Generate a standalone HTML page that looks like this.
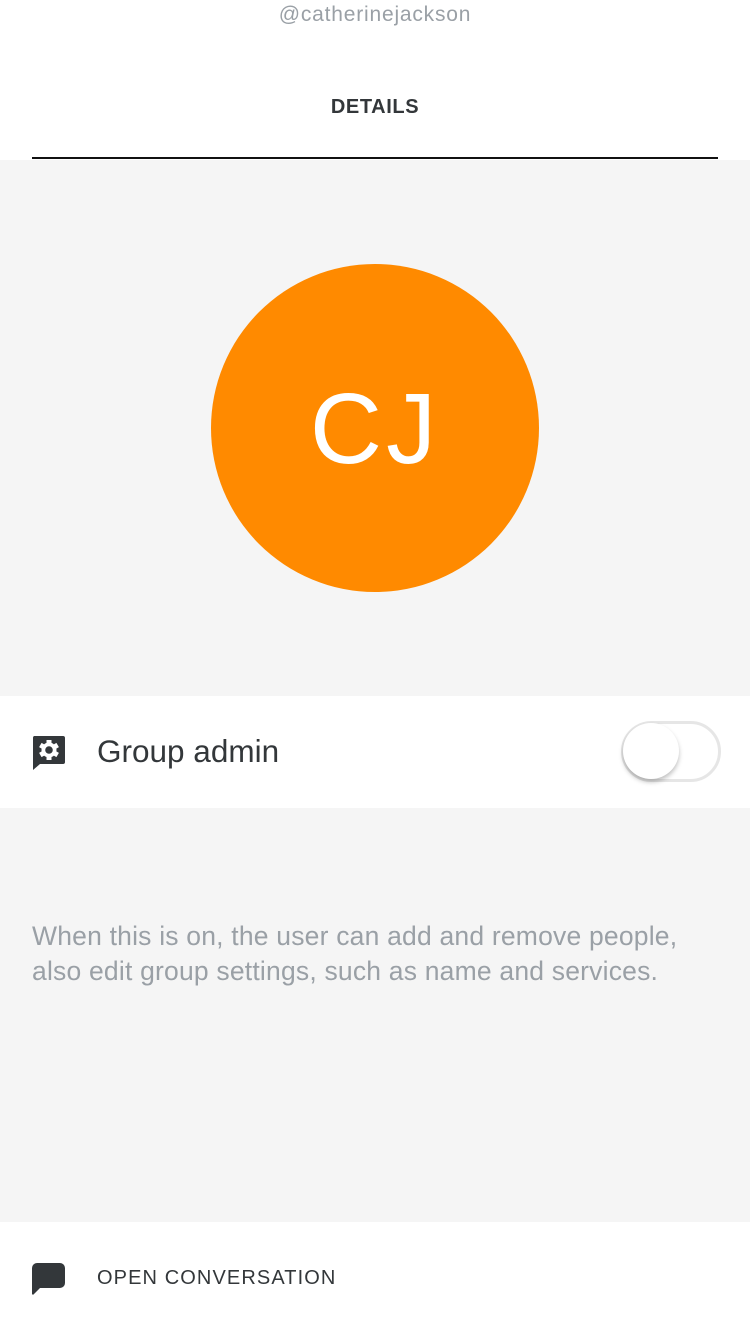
<!DOCTYPE html>
<html><head><meta charset="utf-8"><style>
body{margin:0;width:750px;height:1334px;background:#f5f5f5;font-family:"Liberation Sans",sans-serif;position:relative;overflow:hidden}
.a{position:absolute}
</style></head><body>
<div class="a" style="left:0;top:0;width:750px;height:160px;background:#fff"></div>
<div class="a" style="left:0;top:3px;width:750px;text-align:center;font-size:21px;color:#9aa0a6;letter-spacing:0.8px">@catherinejackson</div>
<div class="a" style="left:0;top:96px;width:750px;text-align:center;font-size:20px;font-weight:bold;color:#33373a;letter-spacing:0.6px">DETAILS</div>
<div class="a" style="left:32px;top:157px;width:686px;height:2px;background:#111"></div>
<div class="a" style="left:211px;top:264px;width:328px;height:328px;border-radius:50%;background:#ff8a00;color:#fff;font-size:100px;line-height:330px;text-align:center;letter-spacing:4px">CJ</div>
<div class="a" style="left:0;top:696px;width:750px;height:112px;background:#fff"></div>
<svg class="a" style="left:32px;top:736px" width="33" height="34" viewBox="0 0 33 34"><path d="M2 0H31a2 2 0 0 1 2 2V26a2 2 0 0 1-2 2H8L1 34V2a2 2 0 0 1 1-2z" fill="#33373a"/><g transform="translate(17,14)" fill="#fff"><circle r="7.5"/><g><rect x="-2.5" y="-10" width="5" height="20"/><rect x="-2.5" y="-10" width="5" height="20" transform="rotate(60)"/><rect x="-2.5" y="-10" width="5" height="20" transform="rotate(120)"/></g><circle r="3.8" fill="#33373a"/></g></svg>
<div class="a" style="left:97px;top:733px;font-size:31.5px;color:#33373a">Group admin</div>
<div class="a" style="left:621px;top:721px;width:94px;height:55px;border:3px solid #e6e6e6;border-radius:31px;background:#fff"></div>
<div class="a" style="left:623px;top:723px;width:56px;height:56px;border-radius:50%;background:#fff;box-shadow:0 3px 5px rgba(0,0,0,0.25)"></div>
<div class="a" style="left:32px;top:919px;width:670px;font-size:26.5px;line-height:35px;color:#9aa0a6;letter-spacing:0.2px">When this is on, the user can add and remove people, also edit group settings, such as name and services.</div>
<div class="a" style="left:0;top:1222px;width:750px;height:112px;background:#fff"></div>
<svg class="a" style="left:32px;top:1263px" width="33" height="32" viewBox="0 0 33 32"><path d="M5 0H28a5 5 0 0 1 5 5V20a5 5 0 0 1-5 5H8L2 31a1 1 0 0 1-2-1V5a5 5 0 0 1 5-5z" fill="#33373a"/></svg>
<div class="a" style="left:97px;top:1267px;font-size:20px;color:#33373a;letter-spacing:1.1px">OPEN CONVERSATION</div>
</body></html>
